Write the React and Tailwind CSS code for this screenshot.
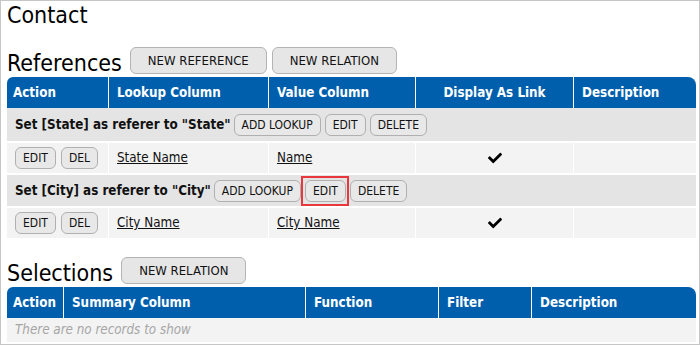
import React from "react";
import { FaCheck } from "react-icons/fa";

const font = "font-['DejaVu_Sans_Condensed','DejaVu_Sans',sans-serif] font-stretch-condensed";

const refCols = [
  { name: "Action", w: 101 },
  { name: "Lookup Column", w: 160 },
  { name: "Value Column", w: 147 },
  { name: "Display As Link", w: 158, center: true },
  { name: "Description", w: 123 },
];

const selCols = [
  { name: "Action", w: 56 },
  { name: "Summary Column", w: 242 },
  { name: "Function", w: 133 },
  { name: "Filter", w: 93 },
  { name: "Description", w: 165 },
];

const groups = [
  {
    title: 'Set [State] as referer to "State"',
    lookup: "State Name",
    value: "Name",
  },
  {
    title: 'Set [City] as referer to "City"',
    lookup: "City Name",
    value: "City Name",
    marked: true,
  },
];

function TopButton({ children }) {
  return (
    <button className="h-[27px] mb-[3px] px-[17px] rounded-[6px] border border-[#b4b4b4] bg-[#e6e6e6] text-[13px] leading-none text-[#111]">
      {children}
    </button>
  );
}

function SmallButton({ children, marked }) {
  return (
    <button className="relative h-[22px] px-[7px] rounded-[6px] border border-[#b0b0b0] bg-[#e8e8e8] text-[12px] leading-none text-[#111]">
      {children}
      {marked && (
        <span className="absolute -left-[5px] -right-[4px] -top-[5px] -bottom-[5px] border-2 border-[#e8383d]" />
      )}
    </button>
  );
}

function HeaderRow({ cols }) {
  return (
    <thead>
      <tr>
        {cols.map((c, i) => (
          <th
            key={c.name}
            className={
              "h-[31px] p-0 bg-[#005fad] text-white text-[13.3px] font-bold align-middle " +
              (i === 0 ? "pl-[6px] rounded-tl-[6px] " : "pl-[8px] border-l border-white ") +
              (i === cols.length - 1 ? "rounded-tr-[8px] " : "") +
              (c.center ? "text-center pr-[8px]" : "text-left")
            }
          >
            {c.name}
          </th>
        ))}
      </tr>
    </thead>
  );
}

function Heading({ title, children }) {
  return (
    <div className="flex items-end gap-[8px]">
      <h2 className="text-[23px] leading-[28px] text-black">{title}</h2>
      <div className="flex items-end gap-[5px]">{children}</div>
    </div>
  );
}

export default function App() {
  return (
    <div className={"w-[700px] h-[345px] border border-[#c6c6c6] pl-[6px] bg-white text-black " + font}>
      <h1 className="text-[23px] leading-[28px]">Contact</h1>

      <div className="mt-[18px]">
        <Heading title="References">
          <TopButton>NEW REFERENCE</TopButton>
          <TopButton>NEW RELATION</TopButton>
        </Heading>
      </div>

      <table className="w-[689px] table-fixed border-separate border-spacing-0 text-[13.3px]">
        <colgroup>
          {refCols.map((c) => (
            <col key={c.name} style={{ width: c.w }} />
          ))}
        </colgroup>
        <HeaderRow cols={refCols} />
        <tbody>
          {groups.map((g, gi) => (
            <React.Fragment key={g.title}>
              <tr>
                <td
                  colSpan={5}
                  className={
                    "p-0 pl-[8px] bg-[#e4e4e4] align-middle " +
                    (gi === 0 ? "h-[33px]" : "h-[33px] border-t-2 border-white")
                  }
                >
                  <div className="flex items-center gap-[4px]">
                    <span className="font-bold text-[#111] mr-[-1px]">{g.title}</span>
                    <SmallButton>ADD LOOKUP</SmallButton>
                    <SmallButton marked={g.marked}>EDIT</SmallButton>
                    <SmallButton>DELETE</SmallButton>
                  </div>
                </td>
              </tr>
              <tr>
                <td className="h-[32px] p-0 pl-[8px] bg-[#f3f3f3] border-t-2 border-white align-middle">
                  <div className="flex items-center gap-[5px]">
                    <SmallButton>EDIT</SmallButton>
                    <SmallButton>DEL</SmallButton>
                  </div>
                </td>
                <td className="p-0 pl-[8px] bg-[#f3f3f3] border-t-2 border-l border-white align-middle">
                  <a className="underline text-[#111]">{g.lookup}</a>
                </td>
                <td className="p-0 pl-[8px] bg-[#f3f3f3] border-t-2 border-l border-white align-middle">
                  <a className="underline text-[#111]">{g.value}</a>
                </td>
                <td className="p-0 bg-[#f3f3f3] border-t-2 border-l border-white align-middle">
                  <div className="flex justify-center">
                    <FaCheck className="text-[14px] text-black" />
                  </div>
                </td>
                <td className="p-0 bg-[#f3f3f3] border-t-2 border-l border-white" />
              </tr>
            </React.Fragment>
          ))}
        </tbody>
      </table>

      <div className="mt-[19px]">
        <Heading title="Selections">
          <TopButton>NEW RELATION</TopButton>
        </Heading>
      </div>

      <table className="w-[689px] table-fixed border-separate border-spacing-0 text-[13.3px]">
        <colgroup>
          {selCols.map((c) => (
            <col key={c.name} style={{ width: c.w }} />
          ))}
        </colgroup>
        <HeaderRow cols={selCols} />
        <tbody>
          <tr>
            <td colSpan={5} className="h-[24px] p-0 pl-[8px] bg-[#f3f3f3] italic text-[#a6a6a6] align-middle">
              There are no records to show
            </td>
          </tr>
        </tbody>
      </table>
    </div>
  );
}
